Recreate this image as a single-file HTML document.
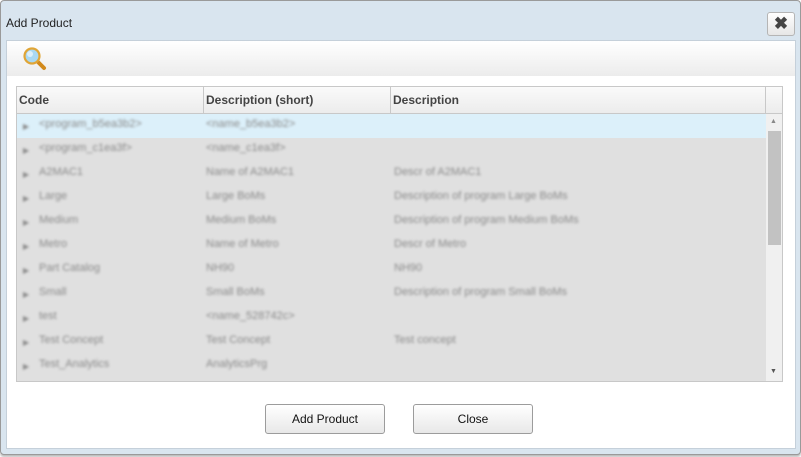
<!DOCTYPE html>
<html><head><style>
body{margin:0;width:801px;height:457px;background:#fff;font-family:"Liberation Sans",sans-serif;overflow:hidden;position:relative}
.dlg{position:absolute;left:0;top:0;width:799px;height:453px;border:1px solid #9a9a9a;border-radius:4px;background:#d9e5ef;box-shadow:0 2px 2px #bbb}
.title{position:absolute;left:5px;top:15px;font-size:12px;color:#222}
.xbtn{position:absolute;left:766px;top:11px;width:26px;height:22px;border:1px solid #b5b5b5;border-radius:3px;background:linear-gradient(#fff,#e6e6e6);font-size:17px;font-weight:bold;text-align:center;line-height:22px;color:#444}
.body{position:absolute;left:6px;top:40px;width:788px;height:407px;background:#fff;border:1px solid #c5d0da}
.tb{position:absolute;left:0;top:0;width:788px;height:35px;background:linear-gradient(#fff,#ececec)}
.grid{position:absolute;left:16px;top:86px;width:765px;height:294px;border:1px solid #c8c8c8;background:#e0e0e0;overflow:hidden}
.hdr{position:absolute;left:0;top:0;width:765px;height:26px;background:linear-gradient(#fafafa,#ececec);border-bottom:1px solid #c8c8c8;font-size:12px;font-weight:bold;color:#444}
.hdr div{position:absolute;top:0;height:26px;line-height:27px;border-right:1px solid #c8c8c8;padding-left:2px;box-sizing:border-box}
.row{position:absolute;left:0;width:749px;height:24px;font-size:11px;color:#8a8a8a;filter:blur(1.2px)}
.row span{position:absolute;top:4px;white-space:nowrap}
.row .a{left:6px;font-size:8px;top:8px}
.sb{position:absolute;left:749px;top:27px;width:16px;height:267px;background:#f0f0f0}
.btn{position:absolute;top:404px;width:118px;height:28px;border:1px solid #9c9c9c;border-radius:3px;background:linear-gradient(#fff,#e8e8e8);font-size:12px;text-align:center;line-height:28px;color:#111}
</style></head><body>
<div class="dlg">
<div class="title">Add Product</div>
<div class="xbtn">✖</div>
</div>
<div class="body"><div class="tb">
<svg style="position:absolute;left:15px;top:5px" width="26" height="26" viewBox="0 0 26 26"><line x1="15" y1="15" x2="22" y2="22" stroke="#d28a1c" stroke-width="4" stroke-linecap="round"/><circle cx="10" cy="10" r="7.5" fill="#a9d8f2" stroke="#e0a536" stroke-width="2.2"/><circle cx="8" cy="8" r="3" fill="#fff" opacity=".6"/></svg>
</div></div>
<div class="grid">
<div class="hdr"><div style="left:0;width:187px">Code</div><div style="left:187px;width:187px">Description (short)</div><div style="left:374px;width:375px">Description</div></div>
<div class="row" style="top:27px;background:#dcf0fa;filter:none"></div>
<div class="row" style="top:27px"><span class="a">▶</span><span style="left:22px">&lt;program_b5ea3b2&gt;</span><span style="left:189px">&lt;name_b5ea3b2&gt;</span></div>
<div class="row" style="top:51px"><span class="a">▶</span><span style="left:22px">&lt;program_c1ea3f&gt;</span><span style="left:189px">&lt;name_c1ea3f&gt;</span></div>
<div class="row" style="top:75px"><span class="a">▶</span><span style="left:22px">A2MAC1</span><span style="left:189px">Name of A2MAC1</span><span style="left:377px">Descr of A2MAC1</span></div>
<div class="row" style="top:99px"><span class="a">▶</span><span style="left:22px">Large</span><span style="left:189px">Large BoMs</span><span style="left:377px">Description of program Large BoMs</span></div>
<div class="row" style="top:123px"><span class="a">▶</span><span style="left:22px">Medium</span><span style="left:189px">Medium BoMs</span><span style="left:377px">Description of program Medium BoMs</span></div>
<div class="row" style="top:147px"><span class="a">▶</span><span style="left:22px">Metro</span><span style="left:189px">Name of Metro</span><span style="left:377px">Descr of Metro</span></div>
<div class="row" style="top:171px"><span class="a">▶</span><span style="left:22px">Part Catalog</span><span style="left:189px">NH90</span><span style="left:377px">NH90</span></div>
<div class="row" style="top:195px"><span class="a">▶</span><span style="left:22px">Small</span><span style="left:189px">Small BoMs</span><span style="left:377px">Description of program Small BoMs</span></div>
<div class="row" style="top:219px"><span class="a">▶</span><span style="left:22px">test</span><span style="left:189px">&lt;name_528742c&gt;</span></div>
<div class="row" style="top:243px"><span class="a">▶</span><span style="left:22px">Test Concept</span><span style="left:189px">Test Concept</span><span style="left:377px">Test concept</span></div>
<div class="row" style="top:267px"><span class="a">▶</span><span style="left:22px">Test_Analytics</span><span style="left:189px">AnalyticsPrg</span></div>
<div class="sb"><div style="position:absolute;left:4px;top:4px;font-size:7px;color:#888">▲</div><div style="position:absolute;left:2px;top:17px;width:13px;height:114px;background:#c2c2c2"></div><div style="position:absolute;left:4px;top:254px;font-size:7px;color:#555">▼</div></div>
</div>
<div class="btn" style="left:265px">Add Product</div>
<div class="btn" style="left:413px">Close</div>
</body></html>
